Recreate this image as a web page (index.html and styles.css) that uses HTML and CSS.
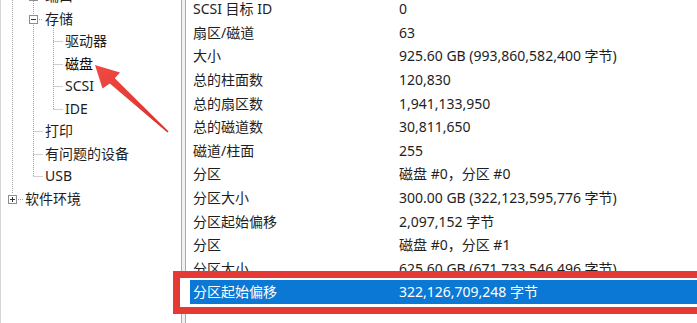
FILE: index.html
```html
<!DOCTYPE html>
<html lang="zh-CN">
<head>
<meta charset="utf-8">
<title>系统信息</title>
<link rel="stylesheet" href="styles.css">
</head>
<body>
<div class="app">
  <div class="tree">
    <svg class="tree-lines" width="180" height="323" viewBox="0 0 180 323">
      <g stroke="#a0a0a0" stroke-width="1" stroke-dasharray="1 1" fill="none">
        <path d="M12.5 0 V194"/>
        <path d="M33.5 1 V15 M33.5 23 V176.5"/>
        <path d="M37 19.5 H43"/>
        <path d="M33.5 131.5 H43 M33.5 154.5 H43 M33.5 176.5 H43"/>
        <path d="M53.5 24 V109.5"/>
        <path d="M53.5 41.5 H63 M53.5 64.5 H63 M53.5 86.5 H63 M53.5 109.5 H63"/>
        <path d="M16 199.5 H23"/>
      </g>
      <g stroke="#8e8e8e" fill="#fff">
        <rect x="29.5" y="-8.5" width="8" height="9"/>
        <rect x="29.5" y="15.5" width="8" height="8"/>
        <rect x="8.5" y="195.5" width="8" height="8"/>
      </g>
      <g stroke="#333" stroke-width="1">
        <path d="M31 19.5 H36"/>
        <path d="M10 199.5 H15 M12.5 197 V202"/>
      </g>
    </svg>
    <ul class="nodes">
      <li class="node lv2">端口</li>
      <li class="node lv2">存储</li>
      <li class="node lv3">驱动器</li>
      <li class="node lv3 current">磁盘</li>
      <li class="node lv3">SCSI</li>
      <li class="node lv3">IDE</li>
      <li class="node lv2">打印</li>
      <li class="node lv2">有问题的设备</li>
      <li class="node lv2">USB</li>
      <li class="node lv1">软件环境</li>
    </ul>
  </div>
  <div class="splitter"></div>
  <div class="list">
    <div class="row"><span class="key">SCSI 目标 ID</span><span class="val">0</span></div>
    <div class="row"><span class="key">扇区/磁道</span><span class="val">63</span></div>
    <div class="row"><span class="key">大小</span><span class="val">925.60 GB (993,860,582,400 字节)</span></div>
    <div class="row"><span class="key">总的柱面数</span><span class="val">120,830</span></div>
    <div class="row"><span class="key">总的扇区数</span><span class="val">1,941,133,950</span></div>
    <div class="row"><span class="key">总的磁道数</span><span class="val">30,811,650</span></div>
    <div class="row"><span class="key">磁道/柱面</span><span class="val">255</span></div>
    <div class="row"><span class="key">分区</span><span class="val">磁盘 #0，分区 #0</span></div>
    <div class="row"><span class="key">分区大小</span><span class="val">300.00 GB (322,123,595,776 字节)</span></div>
    <div class="row"><span class="key">分区起始偏移</span><span class="val">2,097,152 字节</span></div>
    <div class="row"><span class="key">分区</span><span class="val">磁盘 #0，分区 #1</span></div>
    <div class="row"><span class="key">分区大小</span><span class="val">625.60 GB (671,733,546,496 字节)</span></div>
    <div class="row selected"><span class="key">分区起始偏移</span><span class="val">322,126,709,248 字节</span></div>
  </div>
  <div class="mark-box"></div>
  <svg class="mark-arrow" width="697" height="323" viewBox="0 0 697 323">
    <defs>
      <linearGradient id="ag" x1="0" y1="0" x2="1" y2="1">
        <stop offset="0" stop-color="#f04a44"/>
        <stop offset="1" stop-color="#d9302c"/>
      </linearGradient>
    </defs>
    <polygon fill="url(#ag)" points="95,65 120,72.5 114.8,78.3 168.6,131.4 167.4,132.6 109.8,83.5 102.5,88.5"/>
  </svg>
</div>
</body>
</html>
```

FILE: styles.css
```css
* { box-sizing: border-box; }
html, body {
  margin: 0;
  padding: 0;
  background: #fff;
}
body {
  font-family: "Noto Sans", "Noto Sans CJK SC", sans-serif;
  font-size: 14px;
  color: #1e1e1e;
}
.app {
  position: relative;
  display: flex;
  width: 697px;
  height: 323px;
  overflow: hidden;
}
.tree {
  position: relative;
  width: 182px;
  flex: none;
  border-left: 1px solid #d6d6d6;
  border-right: 1px solid #a9a9a9;
  background: #fff;
  overflow: hidden;
}
.tree-lines {
  position: absolute;
  left: -1px;
  top: 0;
}
.nodes {
  position: relative;
  list-style: none;
  margin: -14.75px 0 0;
  padding: 0;
}
.node {
  height: 22.5px;
  line-height: 22.5px;
  white-space: nowrap;
}
.lv1 { padding-left: 24px; }
.lv2 { padding-left: 44px; }
.lv3 { padding-left: 64px; }
.current { color: #000; }
.splitter {
  width: 3px;
  flex: none;
  background: #f0f0f0;
}
.list {
  flex: 1;
  border-left: 1px solid #a9a9a9;
  padding-left: 4px;
}
.list .row:first-child { margin-top: -2.8px; }
.row {
  display: flex;
  height: 23.6px;
  line-height: 23.6px;
  white-space: nowrap;
}
.key {
  width: 209px;
  flex: none;
  padding-left: 3px;
}
.val { flex: 1; }
.selected {
  background: #0a78d4;
  color: #fff;
}
.mark-box {
  position: absolute;
  left: 173px;
  top: 271px;
  width: 560px;
  height: 43px;
  border: 7px solid #e53935;
  background: linear-gradient(to right, #fff 0 10px, transparent 10px);
}
.mark-arrow {
  position: absolute;
  left: 0;
  top: 0;
  pointer-events: none;
}
```
